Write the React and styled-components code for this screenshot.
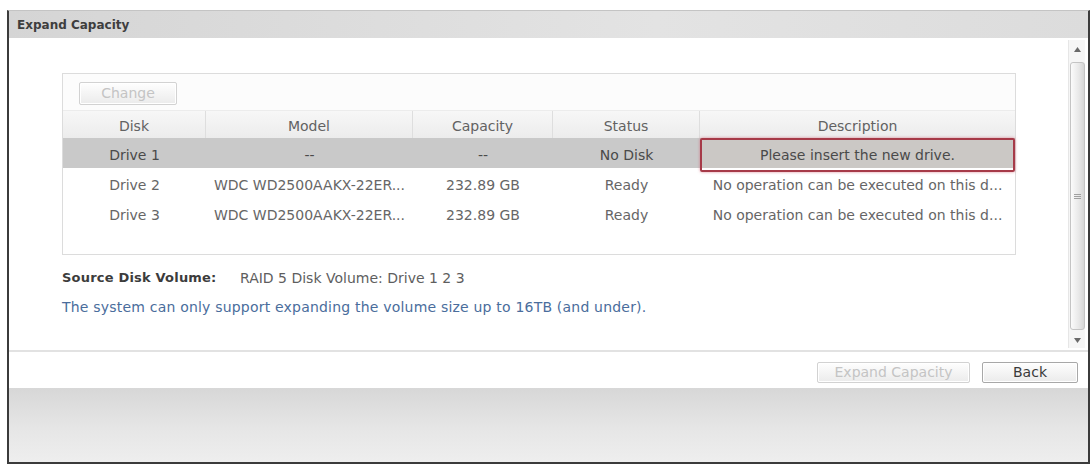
import React from 'react';
import styled, { createGlobalStyle, css } from 'styled-components';

const GlobalStyle = createGlobalStyle`
  html, body { margin: 0; padding: 0; background: #fff; }
  body { font-family: "DejaVu Sans", Verdana, sans-serif; }
  * { box-sizing: border-box; }
`;

const Page = styled.div`
  padding: 10px 2px 1px 7px;
`;

const Window = styled.div`
  display: flex;
  flex-direction: column;
  height: 454px;
  border: 2px solid #3b3b3b;
  border-top: 1px solid #c4c4c4;
  background: #fff;
`;

const TitleBar = styled.div`
  height: 27px;
  flex: none;
  display: flex;
  align-items: center;
  padding-left: 8px;
  background: linear-gradient(to right, #d5d5d5 0%, #dcdcdc 30%, #e3e3e3 60%, #dcdcdc 100%);
  font-size: 12px;
  font-weight: bold;
  color: #3e3e3e;
`;

const ContentPane = styled.div`
  height: 314px;
  flex: none;
  display: flex;
  border-bottom: 2px solid #e2e2e2;
`;

const Body = styled.div`
  flex: 1;
  min-width: 0;
  padding: 35px 52px 0 53px;
`;

const ScrollBar = styled.div`
  width: 17px;
  margin: 2px 3px 2px 0;
  display: flex;
  flex-direction: column;
  align-items: center;
  background: #f6f6f6;
  border-left: 1px solid #e6e6e6;
`;

const Arrow = styled.div`
  height: ${p => p.$h}px;
  flex: none;
  display: flex;
  align-items: center;
  justify-content: center;
`;

const Thumb = styled.div`
  flex: 1;
  width: 15px;
  margin: 4px 0 2px;
  border: 1px solid #c4c4c4;
  border-radius: 3px;
  background: linear-gradient(to right, #fbfbfb, #e8e8e8 60%, #d6d6d6);
  display: flex;
  align-items: center;
  justify-content: center;
`;

const Table = styled.div`
  height: 182px;
  border: 1px solid #dcdcdc;
  display: flex;
  flex-direction: column;
`;

const Toolbar = styled.div`
  height: 36px;
  flex: none;
  padding: 8px 0 0 16px;
  background: #fcfcfc;
`;

const cols = '143px 207px 140px 147px 1fr';

const HeaderRow = styled.div`
  display: grid;
  grid-template-columns: ${cols};
  height: 28px;
  flex: none;
  background: linear-gradient(#f7f7f7, #ececec);
  border-top: 1px solid #ececec;
`;

const HeaderCell = styled.div`
  text-align: center;
  font-size: 14px;
  color: #626262;
  padding-top: 3px;
  line-height: 24px;
  border-right: ${p => (p.$last ? 'none' : '1px solid #dedede')};
`;

const Row = styled.div`
  display: grid;
  grid-template-columns: ${cols};
  height: 30px;
  flex: none;
  background: ${p => (p.$selected ? '#c9c9c9' : '#fff')};
`;

const Cell = styled.div`
  position: relative;
  text-align: center;
  font-size: 14px;
  color: ${p => (p.$dark ? '#4a4a4a' : '#666')};
  padding: 4px 6px 0;
  line-height: 26px;
  white-space: nowrap;
  overflow: ${p => (p.$marked ? 'visible' : 'hidden')};
  text-overflow: ellipsis;
  ${p =>
    p.$marked &&
    css`
      background: #cbc8c5;
      &::after {
        content: '';
        position: absolute;
        left: 0;
        right: 0;
        top: 0;
        bottom: -4px;
        border: 2px solid #a63a48;
        border-radius: 2px;
        box-shadow: 0 0 3px rgba(210, 90, 110, 0.7);
        pointer-events: none;
      }
    `}
`;

const InfoRow = styled.div`
  margin-top: 13px;
  display: flex;
  line-height: 20px;
`;

const InfoLabel = styled.div`
  width: 178px;
  font-size: 13px;
  font-weight: bold;
  letter-spacing: 0.2px;
  color: #3c3c3c;
`;

const InfoValue = styled.div`
  font-size: 14px;
  color: #5e5e5e;
`;

const Note = styled.div`
  margin-top: 9px;
  line-height: 20px;
  font-size: 14px;
  letter-spacing: 0.2px;
  color: #4a6d9c;
`;

const ButtonRow = styled.div`
  height: 36px;
  flex: none;
  display: flex;
  justify-content: flex-end;
  align-items: flex-start;
  gap: 12px;
  padding: 10px 10px 0 0;
`;

const Button = styled.button`
  height: ${p => p.$h || 21}px;
  width: ${p => p.$w}px;
  padding: 0;
  font-family: "DejaVu Sans", Verdana, sans-serif;
  font-size: 14px;
  line-height: 19px;
  border: 1px solid ${p => (p.$disabled ? '#d2d2d2' : '#a8a8a8')};
  border-radius: 2px;
  background: linear-gradient(#fefefe, #ebebeb);
  color: ${p => (p.$disabled ? '#c4c4c4' : '#3a3a3a')};
  box-shadow: inset 0 0 0 1px #fff;
`;

const Footer = styled.div`
  flex: 1;
  background: linear-gradient(#d7d7d7, #e6e6e6 55%, #eeeeee);
`;

const rows = [
  { disk: 'Drive 1', model: '--', cap: '--', status: 'No Disk', desc: 'Please insert the new drive.', selected: true },
  { disk: 'Drive 2', model: 'WDC WD2500AAKX-22ER...', cap: '232.89 GB', status: 'Ready', desc: 'No operation can be executed on this d...' },
  { disk: 'Drive 3', model: 'WDC WD2500AAKX-22ER...', cap: '232.89 GB', status: 'Ready', desc: 'No operation can be executed on this d...' },
];

const headers = ['Disk', 'Model', 'Capacity', 'Status', 'Description'];

export default function App() {
  return (
    <>
      <GlobalStyle />
      <Page>
        <Window>
          <TitleBar>Expand Capacity</TitleBar>
          <ContentPane>
            <Body>
              <Table>
                <Toolbar>
                  <Button $disabled $w={98} $h={23}>Change</Button>
                </Toolbar>
                <HeaderRow>
                  {headers.map((h, i) => (
                    <HeaderCell key={h} $last={i === headers.length - 1}>{h}</HeaderCell>
                  ))}
                </HeaderRow>
                {rows.map(r => (
                  <Row key={r.disk} $selected={r.selected}>
                    <Cell $dark={r.selected}>{r.disk}</Cell>
                    <Cell $dark={r.selected}>{r.model}</Cell>
                    <Cell $dark={r.selected}>{r.cap}</Cell>
                    <Cell $dark={r.selected}>{r.status}</Cell>
                    <Cell $dark={r.selected} $marked={r.selected}>{r.desc}</Cell>
                  </Row>
                ))}
              </Table>
              <InfoRow>
                <InfoLabel>Source Disk Volume:</InfoLabel>
                <InfoValue>RAID 5 Disk Volume: Drive 1 2 3</InfoValue>
              </InfoRow>
              <Note>The system can only support expanding the volume size up to 16TB (and under).</Note>
            </Body>
            <ScrollBar>
              <Arrow $h={18}>
                <svg width="7" height="5" viewBox="0 0 7 5"><path d="M0 5 L3.5 0 L7 5 Z" fill="#6a6a6a" /></svg>
              </Arrow>
              <Thumb>
                <svg width="7" height="7" viewBox="0 0 7 7">
                  <path d="M0 1.5 H7 M0 3.5 H7 M0 5.5 H7" stroke="#a0a0a0" strokeWidth="1" />
                </svg>
              </Thumb>
              <Arrow $h={16}>
                <svg width="7" height="5" viewBox="0 0 7 5"><path d="M0 0 L7 0 L3.5 5 Z" fill="#6a6a6a" /></svg>
              </Arrow>
            </ScrollBar>
          </ContentPane>
          <ButtonRow>
            <Button $disabled $w={153}>Expand Capacity</Button>
            <Button $w={96}>Back</Button>
          </ButtonRow>
          <Footer />
        </Window>
      </Page>
    </>
  );
}
